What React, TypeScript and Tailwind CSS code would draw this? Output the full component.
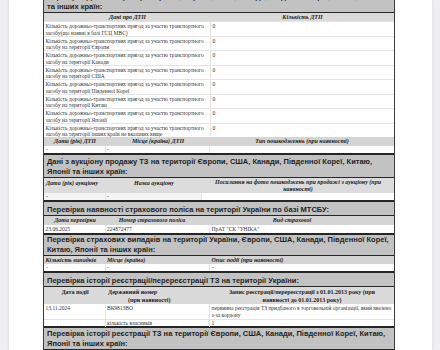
const serif = "font-['Liberation_Serif','Times_New_Roman',serif]"
const sans = "font-['Liberation_Sans',Arial,sans-serif]"

const dtpRows = [
  "засобу(що наявні в базі ГСЦ МВС)",
  "засобу на території Європи",
  "засобу на території Канади",
  "засобу на території США",
  "засобу на території Південної Кореї",
  "засобу на території Китаю",
  "засобу на території Японії",
  "засобу на території інших країн не вказаних вище",
]

function Heading({ lines, className = "" }: { lines: string[]; className?: string }) {
  return (
    <div
      className={`border-t-2 border-b border-[#262626] bg-[#c2c2c2] px-[3px] text-[7.5px] leading-[10px] font-bold text-[#1f1f1f] ${sans} ${className}`}
    >
      {lines.map((l) => (
        <div key={l} className="whitespace-nowrap">
          {l}
        </div>
      ))}
    </div>
  )
}

export default function App() {
  return (
    <div className="flex h-[350px] w-[440px] overflow-hidden bg-[#efeff1]">
      <div className="ml-[9px] h-full w-[423px] bg-white shadow-[0_0_3px_rgba(0,0,0,0.12)]">
        <div className={`-mt-[12px] ml-[34px] w-[352px] border-x border-[#3a3a3a] text-[#333] ${serif}`}>
          {/* ДТП */}
          <Heading
            lines={["Перевірка ДТП на території України, Європи, США, Канади, Південної Кореї, Китаю, Японії", "та інших країн:"]}
            className="pt-[2px]"
          />
          <div className="grid h-[8px] grid-cols-[167px_1fr] bg-[#dadada] text-center text-[6px] leading-[8px] font-bold italic text-[#222]">
            <div>Дані про ДТП</div>
            <div>Кількість ДТП</div>
          </div>
          {dtpRows.map((r) => (
            <div key={r} className="grid h-[14.5px] grid-cols-[167px_1fr] border-t border-[#e4e4e4] text-[5.5px] leading-[6.5px]">
              <div className="border-r border-[#e4e4e4] pl-[1.5px] pt-[1px]">
                <div className="whitespace-nowrap">Кількість дорожньо-транспортних пригод за участю транспортного</div>
                <div className="whitespace-nowrap">{r}</div>
              </div>
              <div className="pl-[1.5px] pt-[1px]">0</div>
            </div>
          ))}
          <div className="grid h-[9px] grid-cols-[62px_104px_1fr] bg-[#d4d4d4] text-center text-[6px] leading-[9px] font-bold italic text-[#222]">
            <div>Дата (рік) ДТП</div>
            <div>Місце (країна) ДТП</div>
            <div>Тип пошкодженнь (при наявності)</div>
          </div>
          <div className="grid h-[7px] grid-cols-[62px_104px_1fr] text-[5.5px] leading-[7px]">
            <div className="border-r border-[#e4e4e4] pl-[2px]">-</div>
            <div className="border-r border-[#e4e4e4] pl-[1px]">-</div>
            <div />
          </div>

          {/* аукціон */}
          <Heading
            lines={[
              "Дані з аукціону продажу ТЗ на території Європи, США, Канади, Південної Кореї, Китаю,",
              "Японії та інших країн:",
            ]}
            className="pt-[2px]"
          />
          <div className="grid h-[15px] grid-cols-[62px_96px_1fr] bg-[#dcdcdc] text-[6px] leading-[7px] font-bold italic text-[#222]">
            <div className="pl-[2px] pt-[2px]">Дата (рік) аукціону</div>
            <div className="pt-[2px] text-center">Назва аукціону</div>
            <div className="pt-[0.5px] text-center">
              <div className="whitespace-nowrap">Посилання на фото пошкоджень при продажі з аукціону (при</div>
              <div>наявності)</div>
            </div>
          </div>
          <div className="grid h-[7px] grid-cols-[62px_96px_1fr] text-[5.5px] leading-[7px]">
            <div className="border-r border-[#e4e4e4] bg-[#f4f4f4] pl-[2px]">-</div>
            <div className="border-r border-[#e4e4e4] bg-[#f4f4f4] pl-[1px]">-</div>
            <div />
          </div>

          {/* поліс */}
          <Heading lines={["Перевірка наявності страхового поліса на території України по базі МТСБУ:"]} className="pt-[3px]" />
          <div className="grid h-[9px] grid-cols-[62px_104px_1fr] bg-[#d4d4d4] text-center text-[6px] leading-[9px] font-bold italic text-[#222]">
            <div>Дата перевірки</div>
            <div className="pr-[12px]">Номер страхового поліса</div>
            <div className="pr-[20px]">Вид страхової</div>
          </div>
          <div className="grid h-[8px] grid-cols-[62px_104px_1fr] text-[5.5px] leading-[8px]">
            <div className="border-r border-[#e4e4e4] pl-[1.5px]">23.06.2025</div>
            <div className="border-r border-[#e4e4e4] pl-[1px]">224872477</div>
            <div className="pl-[1.5px]">ПрАТ "СК "УНІКА"</div>
          </div>

          {/* страхові випадки */}
          <Heading
            lines={[
              "Перевірка страхових випадків на території України, Європи, США, Канади, Південної Кореї,",
              "Китаю, Японії та інших країн:",
            ]}
            className="leading-[9.5px]"
          />
          <div className="grid h-[8px] grid-cols-[62px_104px_1fr] bg-[#d4d4d4] text-[6px] leading-[8px] font-bold italic text-[#222]">
            <div className="pl-[1.5px]">Кількість випадків</div>
            <div className="pl-[1px]">Місце (країна)</div>
            <div className="pl-[1.5px]">Опис події (при наявності)</div>
          </div>
          <div className="grid h-[7px] grid-cols-[62px_104px_1fr] text-[5.5px] leading-[7px]">
            <div className="border-r border-[#e4e4e4] pl-[2px]">-</div>
            <div className="border-r border-[#e4e4e4] pl-[1px]">-</div>
            <div className="pl-[2px]">-</div>
          </div>

          {/* реєстрація Україна */}
          <Heading lines={["Перевірка історії реєстрації/перереєстрації ТЗ на території України:"]} className="pt-[3px]" />
          <div className="grid h-[17px] grid-cols-[62px_104px_1fr] bg-[#dadada] pt-[2px] text-[6px] leading-[7.5px] font-bold text-[#222]">
            <div className="text-center">Дата події</div>
            <div>
              <div className="pl-[2px]">Державний номер</div>
              <div className="pl-[22px]">(при наявності)</div>
            </div>
            <div className="text-center">
              <div className="whitespace-nowrap">Запис реєстрації/перереєстрації з 01.01.2013 року (при</div>
              <div>наявності до 01.01.2013 року)</div>
            </div>
          </div>
          <div className="grid h-[15px] grid-cols-[62px_104px_1fr] text-[5.5px] leading-[7px]">
            <div className="border-r border-[#e4e4e4] pl-[1.5px] pt-[1px]">13.11.2024</div>
            <div className="border-r border-[#e4e4e4] pl-[1px] pt-[1px]">ВК9813ВО</div>
            <div className="pl-[1.5px] pt-[1px]">
              <div className="whitespace-nowrap">первинна реєстрація ТЗ придбаного в торговельній організації, який ввезено</div>
              <div>з-за кордону</div>
            </div>
          </div>
          <div className="grid h-[7px] grid-cols-[62px_104px_1fr] border-t border-[#e4e4e4] text-[5.5px] leading-[7px]">
            <div className="border-r border-[#e4e4e4]" />
            <div className="border-r border-[#e4e4e4] pl-[1px]">кількість власників</div>
            <div className="pl-[1.5px]">1</div>
          </div>

          {/* реєстрація закордон */}
          <Heading
            lines={[
              "Перевірка історії реєстрації ТЗ на території Європи, США, Канади, Південної Кореї, Китаю,",
              "Японії та інших країн:",
            ]}
            className="pt-[1px] leading-[9.5px]"
          />
          <div className="h-[10px] bg-[#dadada]" />
        </div>
      </div>
    </div>
  )
}
